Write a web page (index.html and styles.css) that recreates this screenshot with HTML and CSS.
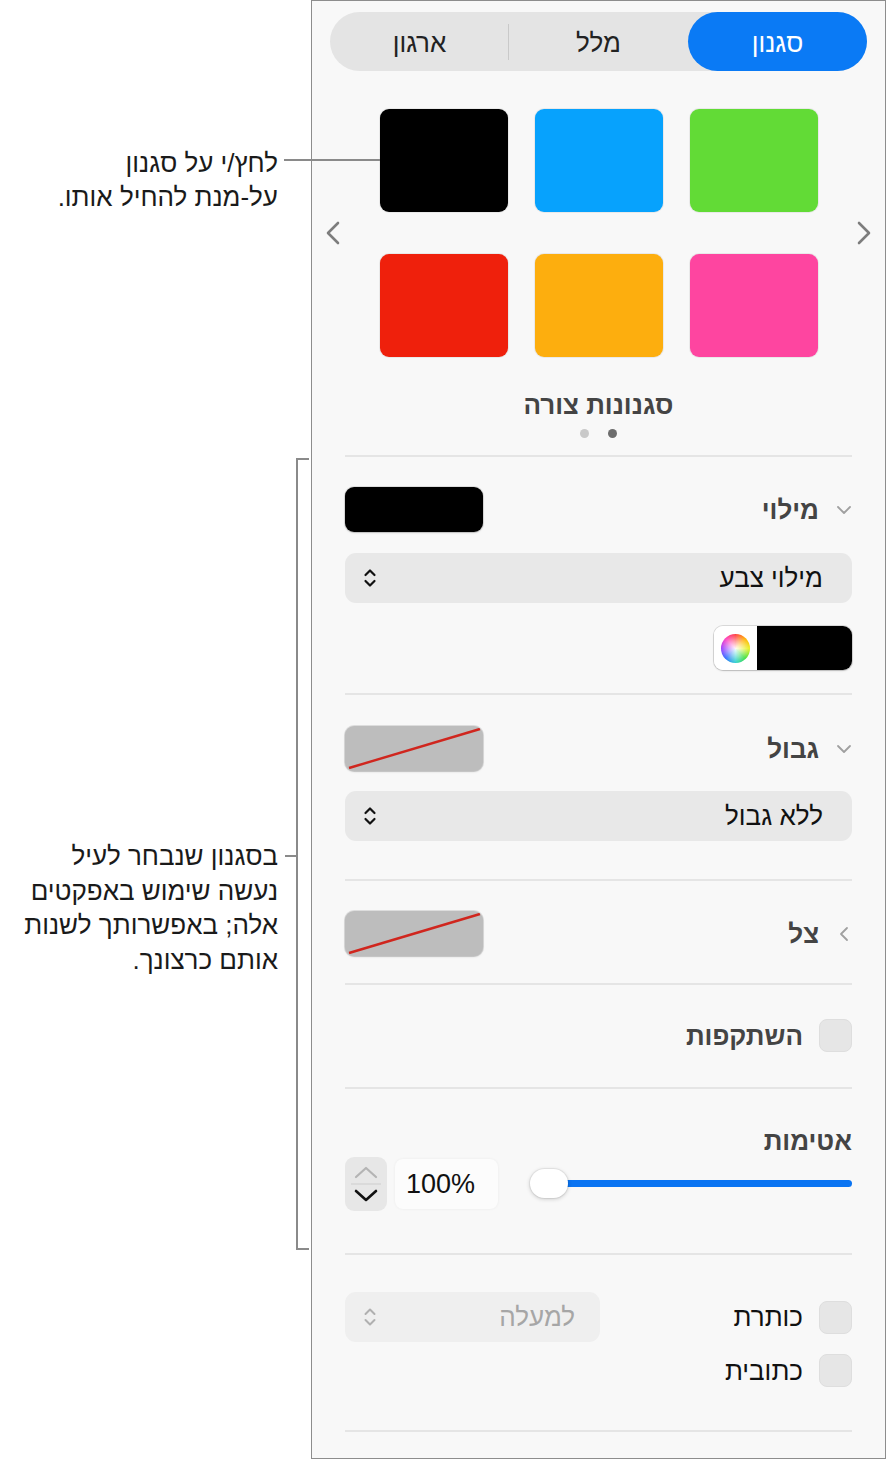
FILE: index.html
```html
<!DOCTYPE html>
<html lang="he" dir="rtl">
<head>
<meta charset="utf-8">
<title>סגנון</title>
<link rel="stylesheet" href="styles.css">
</head>
<body>
<div class="page">
  <aside class="panel">
    <div class="segmented">
      <div class="seg active">סגנון</div>
      <div class="seg">מלל</div>
      <div class="seg divided">ארגון</div>
    </div>

    <div class="carousel">
      <svg class="nav" width="20" height="26" viewBox="0 0 20 26"><path d="M5 3 L15 13 L5 23" fill="none" stroke="#7d7d7d" stroke-width="2.6" stroke-linecap="round" stroke-linejoin="round"/></svg>
      <div class="swatches">
        <div class="swatch green"></div>
        <div class="swatch blue"></div>
        <div class="swatch black"></div>
        <div class="swatch pink"></div>
        <div class="swatch orange"></div>
        <div class="swatch red"></div>
      </div>
      <svg class="nav" width="20" height="26" viewBox="0 0 20 26"><path d="M15 3 L5 13 L15 23" fill="none" stroke="#7d7d7d" stroke-width="2.6" stroke-linecap="round" stroke-linejoin="round"/></svg>
    </div>

    <div class="styles-title">סגנונות צורה</div>
    <div class="dots"><span class="dot on"></span><span class="dot"></span></div>

    <section class="section fill">
      <div class="head">
        <svg class="disclose" width="16" height="12" viewBox="0 0 16 12"><path d="M2 3 L8 9 L14 3" fill="none" stroke="#a0a0a0" stroke-width="1.8" stroke-linecap="round" stroke-linejoin="round"/></svg>
        <span class="label">מילוי</span>
        <div class="well well-black"></div>
      </div>
      <div class="popup">
        <span>מילוי צבע</span>
        <svg class="updown" width="14" height="22" viewBox="0 0 14 22"><path d="M2.5 8 L7 3.5 L11.5 8 M2.5 14 L7 18.5 L11.5 14" fill="none" stroke="#111" stroke-width="2.2" stroke-linecap="round" stroke-linejoin="round"/></svg>
      </div>
      <div class="colorwell">
        <div class="color-part"></div>
        <div class="wheel-part"><span class="wheel"></span></div>
      </div>
    </section>

    <section class="section border">
      <div class="head">
        <svg class="disclose" width="16" height="12" viewBox="0 0 16 12"><path d="M2 3 L8 9 L14 3" fill="none" stroke="#a0a0a0" stroke-width="1.8" stroke-linecap="round" stroke-linejoin="round"/></svg>
        <span class="label">גבול</span>
        <div class="well well-none"><svg width="138" height="45" viewBox="0 0 138 45"><line x1="4" y1="42" x2="135" y2="3" stroke="#d0261e" stroke-width="2.4"/></svg></div>
      </div>
      <div class="popup">
        <span>ללא גבול</span>
        <svg class="updown" width="14" height="22" viewBox="0 0 14 22"><path d="M2.5 8 L7 3.5 L11.5 8 M2.5 14 L7 18.5 L11.5 14" fill="none" stroke="#111" stroke-width="2.2" stroke-linecap="round" stroke-linejoin="round"/></svg>
      </div>
    </section>

    <section class="section shadow">
      <div class="head">
        <svg class="disclose" width="16" height="20" viewBox="0 0 16 20"><path d="M11 4 L5 10 L11 16" fill="none" stroke="#a0a0a0" stroke-width="1.8" stroke-linecap="round" stroke-linejoin="round"/></svg>
        <span class="label">צל</span>
        <div class="well well-none"><svg width="138" height="45" viewBox="0 0 138 45"><line x1="4" y1="42" x2="135" y2="3" stroke="#d0261e" stroke-width="2.4"/></svg></div>
      </div>
    </section>

    <section class="section reflection">
      <div class="check-row">
        <span class="checkbox"></span>
        <span class="label">השתקפות</span>
      </div>
    </section>

    <section class="section opacity">
      <div class="label">אטימות</div>
      <div class="controls">
        <div class="slider">
          <span class="track"></span>
          <span class="thumb"></span>
        </div>
        <div class="field">100%</div>
        <div class="stepper">
          <svg width="42" height="54" viewBox="0 0 42 54"><path d="M11 20 L21 11 L31 20" fill="none" stroke="#b4b4b4" stroke-width="2.2" stroke-linecap="round" stroke-linejoin="round"/><line x1="6" y1="27" x2="36" y2="27" stroke="#d2d2d2" stroke-width="1.2"/><path d="M11 34 L21 43 L31 34" fill="none" stroke="#111" stroke-width="2.6" stroke-linecap="round" stroke-linejoin="round"/></svg>
        </div>
      </div>
    </section>

    <section class="section text">
      <div class="check-row">
        <span class="checkbox"></span>
        <span class="plain">כותרת</span>
        <div class="popup popup-disabled">
          <span>למעלה</span>
          <svg class="updown" width="14" height="22" viewBox="0 0 14 22"><path d="M2.5 8 L7 3.5 L11.5 8 M2.5 14 L7 18.5 L11.5 14" fill="none" stroke="#b0b0b0" stroke-width="2" stroke-linecap="round" stroke-linejoin="round"/></svg>
        </div>
      </div>
      <div class="check-row second">
        <span class="checkbox"></span>
        <span class="plain">כתובית</span>
      </div>
    </section>
    <div class="rule"></div>
  </aside>

  <div class="notes">
    <p class="note note-top">לחץ/י על סגנון<br>על-מנת להחיל אותו.</p>
    <span class="leader leader-top"></span>
    <span class="bracket"></span>
    <span class="leader leader-mid"></span>
    <p class="note note-mid">בסגנון שנבחר לעיל<br>נעשה שימוש באפקטים<br>אלה; באפשרותך לשנות<br>אותם כרצונך.</p>
  </div>
</div>
</body>
</html>
```

FILE: styles.css
```css
html, body {
  margin: 0;
  padding: 0;
  background: #ffffff;
  font-family: "Liberation Sans", "DejaVu Sans", sans-serif;
  color: #111;
}

.page {
  position: relative;
  width: 886px;
  height: 1460px;
  display: flex;
  flex-direction: row;
}

/* ---------- panel ---------- */
.panel {
  box-sizing: border-box;
  width: 575px;
  height: 1459px;
  border: 1px solid #8d8d8d;
  background: #f8f8f8;
  padding: 11px 18px 0 18px;
  display: flex;
  flex-direction: column;
}

.segmented {
  height: 59px;
  border-radius: 30px;
  background: #e4e4e4;
  display: flex;
}
.seg {
  flex: 1;
  display: flex;
  align-items: center;
  justify-content: center;
  padding-top: 3px;
  box-sizing: border-box;
  font-size: 26px;
  color: #222;
  position: relative;
  border-radius: 30px;
}
.seg.active {
  background: #0a7af5;
  color: #fff;
}
.seg.divided::before {
  content: "";
  position: absolute;
  right: 0;
  top: 12px;
  bottom: 11px;
  width: 1px;
  background: #c9c9c9;
}

.carousel {
  margin: 38px -14px 0 -14px;
  padding: 0 7px;
  display: flex;
  align-items: center;
  justify-content: space-between;
}
.nav { display: block; }
.swatches {
  display: grid;
  grid-template-columns: repeat(3, 128px);
  grid-auto-rows: 103px;
  gap: 42px 27px;
}
.swatch {
  border-radius: 9px;
  box-shadow: 0 0 0 1px rgba(0,0,0,0.06);
}
.black { background: #000; }
.blue { background: #07a2fd; }
.green { background: #62db36; }
.red { background: #ef200c; }
.orange { background: #fdae0e; }
.pink { background: #fe45a0; }

.styles-title {
  margin-top: 35px;
  text-align: center;
  font-size: 26px;
  line-height: 26px;
  font-weight: bold;
  color: #444;
}
.dots {
  margin-top: 11px;
  display: flex;
  justify-content: center;
  gap: 19px;
}
.dot {
  width: 9px;
  height: 9px;
  border-radius: 50%;
  background: #c9c9c9;
}
.dot.on { background: #6d6d6d; }

/* ---------- sections ---------- */
.section {
  margin: 0 15px;
  border-top: 2px solid #e5e5e5;
  display: flex;
  flex-direction: column;
}
.section.fill { margin-top: 17px; padding: 30px 0 23px; }
.section.border { padding: 31px 0 38px; }
.section.shadow { padding: 30px 0 27px; }
.section.reflection { padding: 34px 0 35px; }
.section.opacity { padding: 39px 0 42px; }
.section.text { padding: 37px 0 43px; }
.rule {
  margin: 0 15px;
  border-top: 2px solid #e5e5e5;
}

.head {
  height: 45px;
  display: flex;
  align-items: center;
}
.disclose { display: block; margin-left: 17px; }
.label {
  font-size: 26px;
  line-height: 26px;
  font-weight: bold;
  color: #444;
}
.plain {
  font-size: 26px;
  line-height: 28px;
  color: #111;
}
.well {
  margin-right: auto;
  width: 138px;
  height: 45px;
  box-sizing: border-box;
  border-radius: 9px;
  overflow: hidden;
  box-shadow: 0 0 0 1px rgba(0,0,0,0.1), 0 1px 2px rgba(0,0,0,0.15);
}
.well svg { display: block; }
.well-black { background: #000; }
.well-none { background: #bdbdbd; }

.popup {
  margin-top: 21px;
  height: 50px;
  border-radius: 11px;
  background: #e8e8e8;
  display: flex;
  align-items: center;
  justify-content: space-between;
  padding: 0 29px 0 18px;
  font-size: 26px;
  color: #111;
}
.section.border .popup { margin-top: 20px; }
.updown { display: block; }

.colorwell {
  margin-top: 23px;
  align-self: flex-start;
  width: 138px;
  height: 44px;
  border-radius: 9px;
  overflow: hidden;
  display: flex;
  box-shadow: 0 0 0 1px rgba(0,0,0,0.12), 0 1px 2px rgba(0,0,0,0.15);
}
.color-part {
  flex: 1;
  background: #000;
}
.wheel-part {
  width: 43px;
  background: #fff;
  display: flex;
  align-items: center;
  justify-content: center;
}
.wheel {
  width: 29px;
  height: 29px;
  border-radius: 50%;
  background:
    radial-gradient(circle, rgba(255,255,255,0.95) 0%, rgba(255,255,255,0.5) 35%, rgba(255,255,255,0) 70%),
    conic-gradient(#ff4040, #ffb000, #e8f020, #40e040, #30d0d0, #3070ff, #a040ff, #ff40c0, #ff4040);
}

.check-row {
  display: flex;
  align-items: center;
}
.check-row.second { margin-top: 12px; }
.checkbox {
  width: 33px;
  height: 33px;
  box-sizing: border-box;
  border-radius: 8px;
  background: #e6e6e6;
  border: 1px solid #dedede;
  margin-left: 16px;
}

.popup-disabled {
  margin-top: 0;
  margin-right: auto;
  width: 255px;
  box-sizing: border-box;
  background: #efefef;
  color: #a6a6a6;
  padding: 0 25px 0 18px;
}

/* opacity */
.controls {
  margin-top: 3px;
  height: 54px;
  display: flex;
  align-items: center;
}
.slider {
  flex: 1;
  position: relative;
  height: 30px;
  margin-left: 32px;
}
.track {
  position: absolute;
  left: 14px;
  right: 0;
  top: 11px;
  height: 7px;
  border-radius: 4px;
  background: #0a74f2;
}
.thumb {
  position: absolute;
  left: 0;
  top: 0;
  width: 38px;
  height: 29px;
  border-radius: 15px;
  background: #fff;
  box-shadow: 0 0 0 1px rgba(0,0,0,0.05), 0 1px 4px rgba(0,0,0,0.2);
}
.field {
  width: 103px;
  height: 50px;
  box-sizing: border-box;
  border-radius: 8px;
  background: #fcfcfc;
  box-shadow: 0 0 3px rgba(0,0,0,0.06);
  display: flex;
  align-items: center;
  justify-content: flex-start;
  padding-left: 11px;
  font-size: 27px;
  color: #111;
  margin-left: 8px;
  direction: ltr;
}
.stepper {
  width: 42px;
  height: 54px;
  border-radius: 9px;
  background: #e7e7e7;
}
.stepper svg { display: block; }

/* ---------- notes ---------- */
.notes {
  flex: 1;
}
.note {
  position: absolute;
  margin: 0;
  right: 608px;
  font-size: 26px;
  line-height: 34.5px;
  color: #1a1a1a;
  white-space: nowrap;
  text-align: right;
}
.note-top { top: 146px; line-height: 34px; }
.note-mid { top: 839px; }
.leader {
  position: absolute;
  height: 2px;
  background: #8a8a8a;
}
.leader-top { left: 284px; top: 159px; width: 96px; }
.leader-mid { left: 285px; top: 855px; width: 12px; }
.bracket {
  position: absolute;
  left: 296px;
  top: 458px;
  width: 11px;
  height: 788px;
  border: 2px solid #8a8a8a;
  border-right: none;
}
```
